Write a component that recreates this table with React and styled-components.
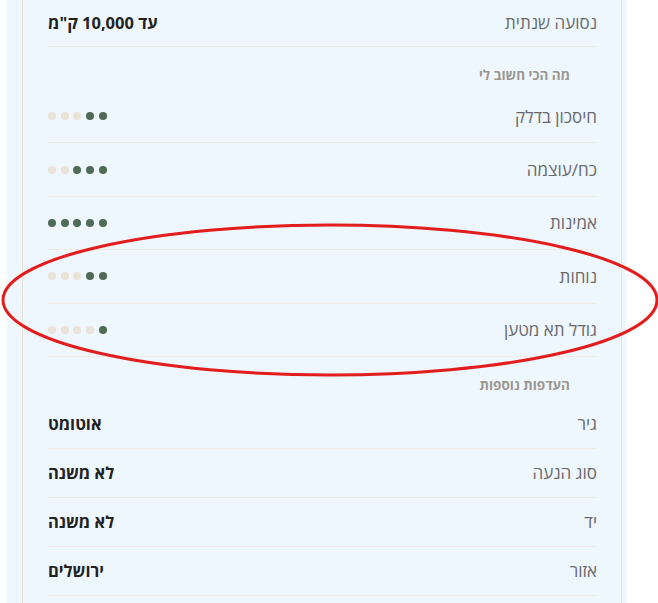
import styled, { createGlobalStyle } from 'styled-components';

const GlobalStyle = createGlobalStyle`
  html, body {
    margin: 0;
    padding: 0;
    background: #ffffff;
  }
  body {
    font-family: "Open Sans", "Liberation Sans", Arial, sans-serif;
  }
`;

const preferences = [
  { label: 'חיסכון בדלק', score: 2 },
  { label: 'כח/עוצמה', score: 3 },
  { label: 'אמינות', score: 5 },
  { label: 'נוחות', score: 2 },
  { label: 'גודל תא מטען', score: 1 },
];

const extras = [
  { label: 'גיר', value: 'אוטומט' },
  { label: 'סוג הנעה', value: 'לא משנה' },
  { label: 'יד', value: 'לא משנה' },
  { label: 'אזור', value: 'ירושלים' },
];

function Rating({ score }) {
  return (
    <Dots>
      {[1, 2, 3, 4, 5].map((n) => (
        <Dot key={n} $on={n <= score} />
      ))}
    </Dots>
  );
}

export default function App() {
  return (
    <>
      <GlobalStyle />
      <Page>
        <Panel>
          <Card dir="rtl">
            <Row>
              <Label>נסועה שנתית</Label>
              <Value>עד 10,000 ק"מ</Value>
            </Row>

            <SectionTitle>מה הכי חשוב לי</SectionTitle>
            {preferences.map((p) => (
              <Row key={p.label} $tall>
                <Label>{p.label}</Label>
                <Rating score={p.score} />
              </Row>
            ))}

            <SectionTitle>העדפות נוספות</SectionTitle>
            {extras.map((e) => (
              <Row key={e.label}>
                <Label>{e.label}</Label>
                <Value>{e.value}</Value>
              </Row>
            ))}
          </Card>
        </Panel>

        <Annotation width="658" height="603" viewBox="0 0 658 603">
          <ellipse cx="330" cy="300" rx="327" ry="75" fill="none" stroke="#e31c1c" strokeWidth="3" />
        </Annotation>
      </Page>
    </>
  );
}

const Page = styled.div`
  position: relative;
  width: 658px;
  height: 603px;
  overflow: hidden;
`;

const Panel = styled.div`
  width: 619px;
  margin-left: 7px;
  padding: 0 4px 0 15px;
  box-sizing: border-box;
  background: #eef6fe;
`;

const Card = styled.div`
  margin-top: -2px;
  padding: 0 24px 40px 25px;
  border-left: 1px solid #e9e1d2;
  border-right: 1px solid #e9e1d2;
  background: #eef6fe;
`;

const Row = styled.div`
  display: flex;
  align-items: center;
  justify-content: space-between;
  height: ${(p) => (p.$tall ? '53.4px' : '49px')};
  box-sizing: border-box;
  border-bottom: 1px solid #f1eadf;
`;

const Label = styled.span`
  font-size: 17px;
  color: #6a6a6a;
`;

const Value = styled.span`
  font-size: 16.5px;
  font-weight: 700;
  color: #222222;
`;

const SectionTitle = styled.div`
  padding: 20px 27px 7px 0;
  height: 16px;
  line-height: 16px;
  font-size: 13.5px;
  font-weight: 700;
  color: #9c9690;
`;

const Dots = styled.div`
  display: flex;
  gap: 4.7px;
`;

const Dot = styled.span`
  width: 8px;
  height: 8px;
  border-radius: 50%;
  background: ${(p) => (p.$on ? '#4f6a55' : '#e9e3d8')};
`;

const Annotation = styled.svg`
  position: absolute;
  left: 0;
  top: 0;
  pointer-events: none;
`;
